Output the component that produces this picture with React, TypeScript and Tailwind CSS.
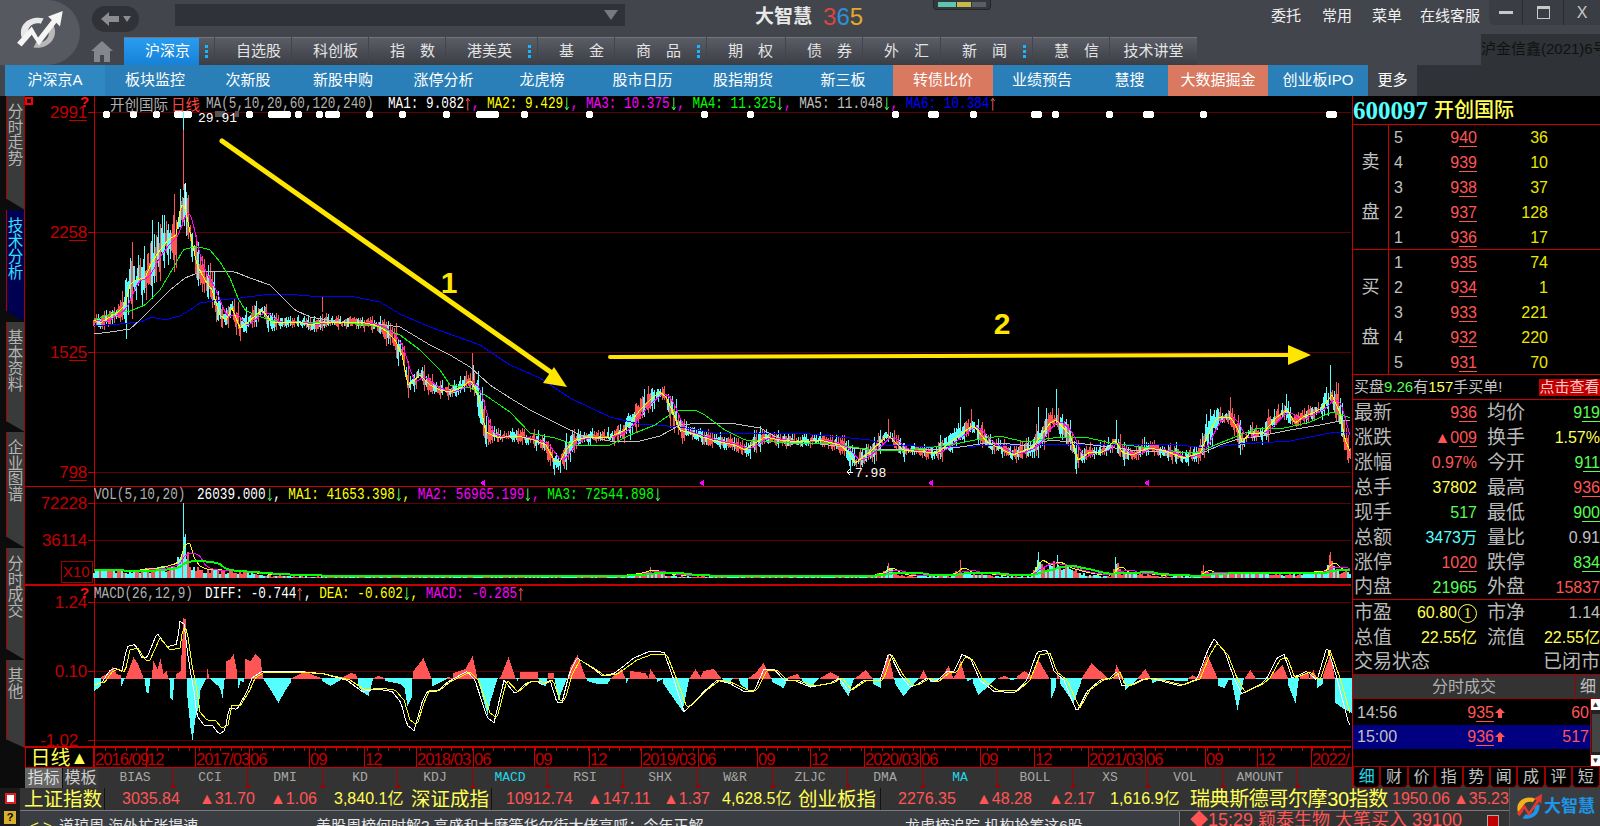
import type { ReactNode } from "react";

type Pt = [number, number];

const RED = "#ff5555";
const CYAN = "#55ffff";
const GRID = "#600000";
const AXIS = "#c00000";
const LINE = "#c80000";

const YELLOW: Pt[] = [[94,320],[100,323],[108,318],[118,312],[125,305],[130,285],[135,280],[145,278],[152,262],[160,250],[168,240],[176,235],[181,205],[185,207],[190,232],[197,265],[205,280],[212,290],[220,315],[226,320],[232,308],[240,328],[248,322],[256,315],[262,310],[272,322],[285,322],[300,322],[310,325],[325,322],[345,322],[360,322],[375,325],[385,330],[395,340],[402,355],[408,385],[412,382],[420,375],[430,385],[440,390],[450,392],[462,387],[471,380],[478,395],[486,432],[492,435],[500,438],[510,436],[522,437],[534,440],[546,445],[554,460],[560,462],[566,450],[575,440],[590,437],[610,437],[625,430],[640,410],[650,400],[660,392],[666,397],[672,410],[680,430],[690,433],[705,438],[720,442],[735,445],[745,450],[752,445],[765,437],[780,440],[800,442],[820,440],[840,445],[848,452],[855,463],[870,452],[888,435],[903,450],[937,453],[953,440],[973,425],[987,442],[1013,455],[1033,447],[1050,423],[1056,420],[1070,435],[1078,460],[1090,452],[1103,452],[1115,440],[1123,453],[1133,455],[1147,448],[1163,450],[1183,458],[1200,453],[1207,437],[1217,418],[1230,417],[1237,427],[1242,442],[1250,433],[1263,433],[1277,417],[1287,410],[1295,423],[1303,417],[1313,413],[1323,407],[1332,395],[1340,413],[1345,440],[1351,453]];
const GREEN: Pt[] = [[94,320],[120,311],[130,311],[145,305],[160,290],[175,265],[183,250],[190,248],[200,247],[210,250],[220,262],[230,278],[238,298],[245,310],[255,315],[270,320],[290,323],[320,322],[350,323],[380,327],[400,335],[420,350],[440,370],[450,385],[470,388],[485,395],[510,412],[530,433],[555,438],[575,445],[610,445],[630,435],[655,425],[675,411],[695,410],[705,415],[725,430],[745,440],[790,443],[830,443],[870,450],[910,450],[950,445],[975,440],[1000,436],[1025,442],[1060,437],[1085,437],[1110,443],[1150,448],[1180,452],[1200,452],[1215,445],[1235,437],[1258,428],[1285,428],[1310,422],[1332,412],[1351,418]];
const GRAY: Pt[] = [[94,334],[110,332],[130,329],[140,320],[155,305],[170,290],[185,278],[200,272],[215,271],[235,272],[250,278],[270,285],[285,300],[295,310],[310,317],[340,322],[370,323],[400,327],[430,345],[450,355],[470,367],[490,385],[510,398],[530,410],[560,425],[580,435],[610,441],[640,441],[660,436],[680,425],[700,423],[730,423],[760,428],[785,442],[820,444],[870,450],[940,449],[960,447],[980,444],[1000,443],[1030,446],[1050,440],[1070,442],[1100,446],[1130,450],[1180,453],[1205,452],[1220,445],[1235,440],[1260,436],[1290,430],[1320,425],[1345,420],[1351,421]];
const BLUE: Pt[] = [[94,326],[120,324],[140,322],[152,317],[165,320],[180,316],[190,310],[200,303],[220,300],[240,298],[270,294],[285,294],[310,296],[350,296],[380,302],[400,314],[430,327],[480,345],[510,365],[540,378],[570,398],[610,417],[640,424],[680,427],[720,434],[800,433],[870,440],[885,445],[950,447],[1000,445],[1035,445],[1060,444],[1100,444],[1180,445],[1205,448],[1240,444],[1290,441],[1330,433],[1351,432]];
const SPIKES: [number, number, number, string][] = [[183,112,130,CYAN],[183,130,190,RED],[322,297,312,RED],[472,353,385,RED],[473,365,380,CYAN],[662,387,400,RED],[888,419,440,RED],[960,407,440,CYAN],[971,409,430,RED],[1038,407,440,CYAN],[1056,389,425,CYAN],[1078,440,468,RED],[1116,420,445,CYAN],[1144,437,450,CYAN],[1230,397,425,RED],[1217,408,430,CYAN],[1286,394,420,CYAN],[1330,365,400,CYAN]];
const VOL_SPIKES: [number, number, string][] = [[183,503,CYAN],[185,534,CYAN],[182,552,RED],[650,567,RED],[888,563,RED],[960,560,RED],[1038,552,CYAN],[1057,555,CYAN],[1115,557,CYAN],[1203,565,RED],[1330,552,RED]];
const VOLUME: Pt[] = [[94,10],[130,8],[160,12],[175,18],[181,30],[183,75],[185,44],[188,30],[192,18],[200,10],[230,8],[260,4],[300,2],[400,2],[620,2],[640,5],[650,10],[660,5],[680,2],[870,2],[882,6],[888,14],[895,6],[905,2],[950,3],[957,8],[960,16],[965,6],[980,5],[1000,2],[1030,2],[1033,12],[1038,25],[1045,14],[1057,20],[1065,12],[1080,7],[1090,4],[1110,2],[1114,10],[1116,20],[1122,6],[1140,5],[1160,2],[1200,2],[1203,12],[1210,5],[1240,6],[1260,6],[1280,5],[1300,5],[1325,8],[1330,25],[1335,10],[1351,8]];
const HIST: Pt[] = [[94,-13],[100,-8],[101,2],[108,6],[112,12],[116,5],[120,4],[121,-8],[124,-1],[125,1],[128,8],[133,22],[138,14],[143,1],[144,-1],[146,-14],[148,-15],[150,-1],[151,1],[153,18],[157,10],[160,20],[163,5],[166,8],[168,1],[169,-2],[170,-20],[172,-22],[174,-1],[175,1],[176,5],[180,8],[182,40],[183,61],[185,60],[186,1],[187,-20],[190,-50],[192,-62],[195,-40],[198,-30],[200,-12],[205,-2],[206,1],[207,10],[209,1],[210,-1],[214,-5],[218,-8],[220,-12],[222,-20],[224,-2],[225,1],[226,18],[230,20],[233,25],[236,10],[237,1],[238,-10],[240,-3],[243,-4],[244,1],[245,20],[250,18],[255,25],[260,20],[262,5],[263,-1],[272,-15],[278,-25],[285,-12],[290,-5],[291,1],[300,5],[305,8],[310,5],[315,3],[321,1],[322,-3],[330,-8],[335,-5],[340,-2],[341,1],[350,6],[355,5],[357,1],[358,-8],[362,-14],[368,-18],[372,-3],[373,1],[378,3],[384,1],[385,-3],[400,-6],[404,-10],[407,-28],[411,-20],[412,1],[413,8],[423,21],[431,1],[432,-8],[446,-1],[447,2],[452,1],[453,6],[465,10],[472,23],[477,1],[478,-4],[487,-37],[490,-23],[497,-1],[500,2],[508,22],[515,1],[517,-3],[519,1],[520,7],[537,7],[538,-1],[540,-6],[545,-8],[547,1],[548,6],[553,6],[554,-1],[558,-22],[565,-4],[567,1],[570,12],[577,24],[585,2],[587,-3],[597,-6],[607,-6],[611,1],[621,10],[625,1],[626,-5],[629,1],[630,8],[645,6],[648,1],[650,10],[655,2],[657,-4],[662,-1],[663,-6],[682,-33],[688,-4],[689,1],[695,10],[700,2],[703,8],[713,10],[720,2],[722,-1],[728,-6],[732,-1],[733,1],[738,1],[740,-6],[747,-12],[748,1],[755,6],[763,16],[770,2],[772,-4],[783,-10],[787,-1],[788,2],[797,5],[800,1],[802,-3],[810,-10],[817,-2],[820,1],[830,7],[838,3],[840,-6],[848,-18],[853,-2],[855,1],[865,9],[872,1],[873,-6],[880,-10],[881,1],[888,25],[893,2],[895,-6],[903,-18],[917,-2],[919,1],[923,9],[927,1],[930,-4],[940,-1],[942,3],[948,13],[953,1],[957,8],[960,18],[965,1],[967,-3],[972,-1],[973,-6],[978,-17],[990,-6],[995,-1],[1000,2],[1005,3],[1008,1],[1010,-2],[1016,-1],[1017,3],[1024,8],[1030,4],[1032,5],[1038,19],[1048,2],[1050,-1],[1051,-20],[1055,-10],[1056,1],[1057,8],[1059,1],[1060,-6],[1073,-25],[1080,-6],[1082,2],[1091,16],[1107,1],[1109,-2],[1113,1],[1116,14],[1123,1],[1125,-12],[1137,-1],[1138,2],[1145,10],[1150,1],[1152,-5],[1160,-1],[1163,-2],[1187,-3],[1188,1],[1192,4],[1197,1],[1198,3],[1207,24],[1217,1],[1218,-8],[1224,-10],[1228,-2],[1231,-2],[1237,-32],[1243,-2],[1245,2],[1250,9],[1255,1],[1256,-1],[1269,-1],[1270,3],[1278,10],[1282,14],[1287,2],[1288,-8],[1295,-25],[1298,-3],[1300,4],[1308,5],[1309,-1],[1310,4],[1313,9],[1316,1],[1317,-10],[1322,-6],[1323,5],[1330,25],[1334,2],[1335,-25],[1342,-30],[1351,-35]];
const DEA: Pt[] = [[94,685],[105,682],[112,672],[118,669],[125,672],[130,650],[138,648],[145,660],[150,660],[160,638],[170,650],[180,648],[183,627],[187,630],[192,665],[197,690],[200,712],[207,720],[215,720],[222,728],[228,725],[232,705],[240,706],[250,690],[255,678],[265,672],[280,672],[300,672],[325,674],[350,680],[365,690],[380,688],[395,690],[404,700],[410,720],[417,725],[425,700],[430,690],[440,690],[450,682],[470,672],[478,680],[490,713],[497,718],[507,680],[518,692],[530,682],[540,681],[545,684],[553,680],[560,700],[565,700],[572,675],[580,660],[597,670],[605,676],[617,674],[623,670],[637,660],[653,654],[667,655],[677,680],[687,708],[697,700],[707,690],[720,680],[733,683],[747,690],[757,690],[767,670],[777,670],[787,680],[797,680],[813,686],[833,683],[842,678],[852,690],[867,680],[883,680],[892,655],[903,675],[913,686],[920,684],[930,678],[938,682],[950,672],[957,672],[965,657],[973,660],[983,680],[997,690],[1018,691],[1030,680],[1040,655],[1050,653],[1057,672],[1067,680],[1075,698],[1080,708],[1090,690],[1103,680],[1113,678],[1120,672],[1125,685],[1133,685],[1143,680],[1153,678],[1183,685],[1200,679],[1210,655],[1217,643],[1228,655],[1237,678],[1245,692],[1263,684],[1270,678],[1280,660],[1287,657],[1295,678],[1310,672],[1320,680],[1330,650],[1340,678],[1352,720]];

function at(points: Pt[], x: number) {
  if (x <= points[0][0]) return points[0][1];
  for (let i = 1; i < points.length; i++) {
    if (x <= points[i][0]) {
      const [x0, y0] = points[i - 1];
      const [x1, y1] = points[i];
      return y0 + ((y1 - y0) * (x - x0)) / (x1 - x0);
    }
  }
  return points[points.length - 1][1];
}

function trailing(points: Pt[], x: number, win: number) {
  let sum = 0;
  for (let i = 0; i < win; i += 2) sum += at(points, x - i);
  return sum / Math.ceil(win / 2);
}

function linePath(fn: (x: number) => number, from = 94, to = 1351) {
  let d = "";
  for (let x = from; x <= to; x += 2) d += `${d ? "L" : "M"}${x} ${fn(x).toFixed(1)}`;
  return d;
}

let seed = 7;
function rnd() {
  seed = (seed * 16807) % 2147483647;
  return seed / 2147483647;
}

function candles() {
  const out = { rw: "", rb: "", cw: "", cb: "" };
  for (let x = 94; x < 1351; x += 2) {
    const m = at(YELLOW, x);
    const slope = Math.abs(at(YELLOW, x + 5) - at(YELLOW, x - 5));
    let amp = Math.min(16, 5 + slope * 0.5);
    if (x > 125 && x < 190) amp += 10;
    const top = m - amp * rnd();
    const bot = m + amp * rnd();
    const wt = top - amp * rnd() * 0.9;
    const wb = bot + amp * rnd() * 0.7;
    if (rnd() > 0.5) {
      out.rw += `M${x} ${wt.toFixed(1)}V${wb.toFixed(1)}`;
      out.rb += `M${x} ${top.toFixed(1)}V${bot.toFixed(1)}`;
    } else {
      out.cw += `M${x} ${wt.toFixed(1)}V${wb.toFixed(1)}`;
      out.cb += `M${x} ${top.toFixed(1)}V${bot.toFixed(1)}`;
    }
  }
  return out;
}

function volumeBars() {
  const out = { r: "", c: "" };
  for (let x = 94; x < 1351; x += 2) {
    const h = at(VOLUME, x) * (0.45 + 0.55 * rnd());
    const d = `M${x} 578V${(578 - h).toFixed(1)}`;
    if (rnd() > 0.5) out.r += d;
    else out.c += d;
  }
  return out;
}

function histBars() {
  const out = { r: "", c: "" };
  for (let x = 94; x <= 1351; x++) {
    const v = at(HIST, x);
    if (v >= 0) out.r += `M${x} 679V${(679 - v).toFixed(1)}`;
    else out.c += `M${x} 678V${(678 - v).toFixed(1)}`;
  }
  return out;
}

const CANDLES = candles();
const VOLS = volumeBars();
const BARS = histBars();

const STARS = [106,133,156,177,181,185,188,249,271,275,279,283,287,298,319,328,332,336,369,402,446,479,483,487,491,495,524,589,704,750,895,931,935,973,1034,1038,1055,1109,1146,1150,1203,1329,1333];

function Grid({ ys, under }: { ys: [number, string, boolean?][]; under?: boolean }) {
  return (
    <>
      {ys.map(([y, label, noUnder]) => (
        <g key={y}>
          <path d={`M88 ${y}H94`} stroke={AXIS} />
          <path d={`M94 ${y}H1351`} stroke={GRID} />
          <text x={noUnder ? 78 : 87} y={y + 6} textAnchor="end" fill={AXIS} fontSize="17" fontFamily="Liberation Sans" letterSpacing="-0.2">
            {label}
          </text>
          {under && <path d={`M69 ${y + 8.5}H87`} stroke={AXIS} />}
        </g>
      ))}
    </>
  );
}

function Star({ x }: { x: number }) {
  return <path d={`M${x - 2} 111h5v1h1v5h-1v1h-5v-1h-1v-5h1z`} fill="#fff" />;
}

function MainChart() {
  return (
    <svg width="1327" height="391" viewBox="25 96 1327 391" className="block overflow-visible" shapeRendering="crispEdges">
      <Grid under ys={[[112, "2991"], [232, "2258"], [352, "1525"], [472, "798"]]} />
      <path d="M94 96V487" stroke={LINE} />
      <path d="M25 486.5H1351" stroke={LINE} />
      <rect x="26" y="98" width="6" height="6" fill="none" stroke="#ff0000" strokeWidth="2" />
      <text x="80" y="107" fill="#ff1010" fontSize="15" fontWeight="bold" fontFamily="Liberation Sans">?</text>
      {STARS.map((x) => <Star key={x} x={x} />)}
      <rect x="215" y="111" width="10" height="6" fill="#555" />
      <rect x="235" y="111" width="4" height="6" fill="#555" />
      <path d={CANDLES.rw} stroke={RED} />
      <path d={CANDLES.cw} stroke={CYAN} />
      <path d={CANDLES.rb} stroke={RED} strokeWidth="2" />
      <path d={CANDLES.cb} stroke={CYAN} strokeWidth="2" />
      {SPIKES.map(([x, a, b, c]) => <path key={`${x}-${a}`} d={`M${x} ${a}V${b}`} stroke={c} />)}
      <path d="M185 183V212" stroke="#fff" />
      <path d={linePath((x) => at(BLUE, x))} fill="none" stroke="#0000ff" />
      <path d={linePath((x) => at(GRAY, x))} fill="none" stroke="#c0c0c0" />
      <path d={linePath((x) => at(GREEN, x))} fill="none" stroke="#00ff00" />
      <path d={linePath((x) => trailing(YELLOW, x, 12))} fill="none" stroke="#ff00ff" />
      <path d={linePath((x) => at(YELLOW, x))} fill="none" stroke="#ffff00" />
      <text x="198" y="122" fill="#fff" fontSize="13" fontFamily="Liberation Mono">29.91</text>
      <path d="M847 472h6M847 472l3-3M847 472l3 3" stroke="#fff" fill="none" />
      <text x="855" y="477" fill="#fff" fontSize="13" fontFamily="Liberation Mono">7.98</text>
      {[485, 704, 933, 1149].map((x) => <path key={x} d={`M${x - 5} 483l5-3v6z`} fill="#ff00ff" />)}
      <g shapeRendering="auto">
        <path d="M222 141L552 373" stroke="#ffe600" strokeWidth="5" strokeLinecap="round" />
        <path d="M554 367L567 387L543 383Z" fill="#ffe600" />
        <path d="M610 357L1290 355" stroke="#ffe600" strokeWidth="4" strokeLinecap="round" />
        <path d="M1288 345L1311 355L1288 365Z" fill="#ffe600" />
        <text x="449" y="293" textAnchor="middle" fill="#ffe600" fontSize="30" fontWeight="bold" fontFamily="Liberation Sans">1</text>
        <text x="1002" y="334" textAnchor="middle" fill="#ffe600" fontSize="30" fontWeight="bold" fontFamily="Liberation Sans">2</text>
      </g>
    </svg>
  );
}

function VolChart() {
  return (
    <svg width="1327" height="99" viewBox="25 487 1327 99" className="block overflow-visible" shapeRendering="crispEdges">
      <Grid ys={[[503, "72228"], [540, "36114"]]} />
      <path d="M94 487V586" stroke={LINE} />
      <path d="M25 585H1351" stroke={LINE} strokeWidth="2" />
      <rect x="61.5" y="561.5" width="31" height="21" fill="none" stroke="#a00000" />
      <text x="63" y="577" fill={AXIS} fontSize="15" fontFamily="Liberation Sans">X10</text>
      <path d={VOLS.r} stroke={RED} strokeWidth="2" />
      <path d={VOLS.c} stroke={CYAN} strokeWidth="2" />
      {VOL_SPIKES.map(([x, y, c]) => <path key={x} d={`M${x} 578V${y}`} stroke={c} />)}
      <path d={linePath((x) => 577 - trailing(VOLUME, x, 10) * 0.8)} fill="none" stroke="#ffff00" />
      <path d={linePath((x) => 577 - trailing(VOLUME, x, 20) * 0.75)} fill="none" stroke="#ff00ff" />
      <path d={linePath((x) => 577 - trailing(VOLUME, x, 40) * 0.7)} fill="none" stroke="#00ff00" strokeWidth="2" />
    </svg>
  );
}

function MacdChart() {
  return (
    <svg width="1327" height="162" viewBox="25 586 1327 162" className="block overflow-visible" shapeRendering="crispEdges">
      <Grid ys={[[602, "1.24"], [671, "0.10"]]} />
      <Grid ys={[[740, "-1.02", true]]} />
      <path d="M94 586V748" stroke={LINE} />
      <path d="M25 747H1351" stroke={LINE} strokeWidth="2" />
      <text x="80" y="598" fill="#ff1010" fontSize="15" fontWeight="bold" fontFamily="Liberation Sans">?</text>
      <path d={BARS.r} stroke={RED} />
      <path d={BARS.c} stroke={CYAN} />
      <path d={linePath((x) => { const v = at(DEA, x + 3); return v + (v - 678) * 0.12; })} fill="none" stroke="#ffffff" />
      <path d={linePath((x) => at(DEA, x))} fill="none" stroke="#ffff00" />
    </svg>
  );
}

const DATES: [number, string][] = [[95,"2016/09"],[147,"12"],[196,"2017/03"],[250,"06"],[310,"09"],[365,"12"],[417,"2018/03"],[474,"06"],[535,"09"],[590,"12"],[642,"2019/03"],[699,"06"],[758,"09"],[811,"12"],[865,"2020/03"],[921,"06"],[981,"09"],[1035,"12"],[1089,"2021/03"],[1146,"06"],[1206,"09"],[1258,"12"],[1312,"2022/"]];

function TimeAxis() {
  let ticks = "";
  for (let x = 94; x < 1351; x += 10.5) ticks += `M${Math.round(x)} 748v3`;
  return (
    <svg width="1258" height="20" viewBox="94 748 1258 20" className="block" shapeRendering="crispEdges">
      <path d={ticks} stroke={LINE} />
      <path d="M94 767H1352" stroke={LINE} />
      {DATES.map(([x, label]) => (
        <g key={x}>
          <path d={`M${x - 1} 748V768`} stroke={LINE} />
          <text x={x} y="765" fill={AXIS} fontSize="16.5" letterSpacing="-0.9" fontFamily="Liberation Sans">{label}</text>
        </g>
      ))}
    </svg>
  );
}

function Mono({ c, children }: { c: string; children: ReactNode }) {
  return <span className={`scale-y-125 ${c}`}>{children}</span>;
}

function Arrow({ up }: { up?: boolean }) {
  return (
    <svg viewBox="0 0 8 14" className="h-[14px] w-[7.6px]" aria-hidden="true">
      {up ? (
        <path d="M4 1V14M2 4L4 1L6 4" fill="none" stroke="#ff5555" />
      ) : (
        <path d="M4 0V13M2 10L4 13L6 10" fill="none" stroke="#55ff55" />
      )}
    </svg>
  );
}

const NAV = [
  { t: "沪深京", w: "w-[90px]", dots: true, on: true },
  { t: "自选股", w: "w-[76px]" },
  { t: "科创板", w: "w-[76px]" },
  { t: "指　数", w: "w-[76px]" },
  { t: "港美英", w: "w-[91px]", dots: true },
  { t: "基　金", w: "w-[76px]" },
  { t: "商　品", w: "w-[91px]", dots: true },
  { t: "期　权", w: "w-[78px]" },
  { t: "债　券", w: "w-[76px]" },
  { t: "外　汇", w: "w-[77px]" },
  { t: "新　闻", w: "w-[91px]", dots: true },
  { t: "慧　信", w: "w-[76px]" },
  { t: "技术讲堂", w: "w-[87px]" },
];

const SUB = [
  { t: "沪深京A", c: "w-[100px] bg-[#3088c2]" },
  { t: "板块监控", c: "w-[100px]" },
  { t: "次新股", c: "w-[86px]" },
  { t: "新股申购", c: "w-[104px]" },
  { t: "涨停分析", c: "w-[97px]" },
  { t: "龙虎榜", c: "w-[100px]" },
  { t: "股市日历", c: "w-[101px]" },
  { t: "股指期货", c: "w-[100px]" },
  { t: "新三板", c: "w-[100px]" },
  { t: "转债比价", c: "w-[100px] bg-[#d9795f]" },
  { t: "业绩预告", c: "w-[98px]" },
  { t: "慧搜", c: "w-[77px]" },
  { t: "大数据掘金", c: "w-[100px] bg-[#d9795f]" },
  { t: "创业板IPO", c: "w-[100px]" },
];

function Dots() {
  return (
    <span className="ml-auto mr-[6px] flex flex-col gap-[2px]">
      <span className="size-[3px] bg-[#19b5ff]" />
      <span className="size-[3px] bg-[#19b5ff]" />
      <span className="size-[3px] bg-[#19b5ff]" />
    </span>
  );
}

function Header() {
  return (
    <div className="flex h-[65px] bg-[#42454c]">
      <div className="flex h-full w-[80px] items-center justify-center rounded-r-[36px] bg-[#565960]">
        <svg viewBox="0 0 56 46" className="ml-[-2px] mt-[-4px] h-[42px] w-[52px]" aria-hidden="true">
          <path d="M9 30C5 15 18 6 33 9L30 15C21 13 14 19 16 29Z" fill="#e8e8e8" />
          <path d="M44 17C50 30 38 44 22 41L25 35C35 37 41 29 38 21Z" fill="#b8b8b8" />
          <path d="M4 36L20 18L27 30L42 11L38 7L54 1L51 18L47 14L28 39L20 27L9 40Z" fill="#f5f5f5" />
        </svg>
      </div>
      <div className="flex flex-1 flex-col">
        <div className="flex h-[36px] items-start">
          <div className="ml-[12px] mt-[6px] flex h-[26px] w-[47px] items-center justify-center gap-[3px] rounded-full bg-[#303237]">
            <svg viewBox="0 0 20 16" className="h-[16px] w-[20px]" aria-hidden="true">
              <path d="M9 1L1 8L9 15V11H19V5H9Z" fill="#8a8c90" />
            </svg>
            <svg viewBox="0 0 8 6" className="h-[6px] w-[8px]" aria-hidden="true">
              <path d="M0 0H8L4 6Z" fill="#8a8c90" />
            </svg>
          </div>
          <div className="ml-[36px] mt-[4px] flex h-[22px] w-[450px] items-center justify-end bg-[#2f3237] pr-[7px]">
            <svg viewBox="0 0 14 10" className="h-[10px] w-[14px]" aria-hidden="true">
              <path d="M0 0H14L7 10Z" fill="#777a80" />
            </svg>
          </div>
          <div className="ml-[130px] mt-[6px] flex items-center">
            <span className="text-[19px] font-bold leading-[22px] text-[#e8e8e8]">大智慧</span>
            <span className="ml-[11px] text-[24px] leading-[22px] font-['Liberation_Sans',sans-serif]">
              <span className="text-[#d9473e]">3</span>
              <span className="text-[#2f8fd8]">6</span>
              <span className="text-[#e2a92c]">5</span>
            </span>
          </div>
          <div className="ml-[70px] flex h-[10px] w-[58px] items-center justify-center gap-[1px] rounded-b-[4px] border border-t-0 border-[#23252a] bg-[#34373d]">
            <span className="h-[5px] w-[18px] bg-[#5ec6b0]" />
            <span className="h-[5px] w-[14px] bg-[#c8b84a]" />
            <span className="h-[5px] w-[14px] bg-[#5a5d63]" />
          </div>
          <div className="ml-[280px] mt-[7px] flex gap-[21px] text-[15px] leading-[17px] text-[#f0f0f0]">
            <span className="w-[30px] whitespace-nowrap">委托</span>
            <span className="w-[29px] whitespace-nowrap">常用</span>
            <span className="w-[27px] whitespace-nowrap">菜单</span>
            <span className="w-[60px] whitespace-nowrap">在线客服</span>
          </div>
          <div className="ml-auto flex h-[25px] w-[111px] rounded-bl-[6px] bg-[#3a3d43] text-[#c8c8c8]">
            <div className="flex w-[34px] items-center justify-center border-r border-[#2a2c31]">
              <span className="h-[3px] w-[14px] bg-[#c8c8c8]" />
            </div>
            <div className="flex w-[41px] items-center justify-center border-r border-[#2a2c31]">
              <span className="h-[13px] w-[13px] border border-t-[3px] border-[#c8c8c8]" />
            </div>
            <div className="flex flex-1 items-center justify-center text-[16px] font-['Liberation_Sans',sans-serif]">X</div>
          </div>
        </div>
        <div className="flex h-[29px] items-end">
          <div className="flex h-full w-[44px] items-center justify-center">
            <svg viewBox="0 0 24 24" className="size-[24px]" aria-hidden="true">
              <path d="M12 2L1 12H4V23H10V16H14V23H20V12H23Z" fill="#85878c" />
            </svg>
          </div>
          <div className="flex h-[28px] gap-[1px]">
            {NAV.map((n) => (
              <div
                key={n.t}
                className={`flex h-full items-center border-t border-[#72757c] bg-gradient-to-b from-[#5a5d65] to-[#3b3e45] text-[15px] text-[#e4e4e4] ${n.w}`}
              >
                {n.on ? (
                  <span className="flex h-full w-[75px] items-center justify-center bg-gradient-to-b from-[#2a9df0] to-[#1581d8] pl-[12px] text-white">
                    {n.t}
                  </span>
                ) : (
                  <span className="w-[75px] whitespace-nowrap pl-[12px] text-center">{n.t}</span>
                )}
                {n.dots && <Dots />}
              </div>
            ))}
          </div>
          <div className="ml-auto flex h-[31px] w-[119px] items-center overflow-hidden whitespace-nowrap bg-[#2f3237] text-[15px] text-[#111]">
            泸金信鑫(2021)6号
          </div>
        </div>
      </div>
    </div>
  );
}

function SubNav() {
  return (
    <div className="flex h-[31px] bg-[#2f3237]">
      <div className="w-[5px] bg-[#42454c]" />
      <div className="flex bg-[#2b7fb8] text-[15px] text-white">
        {SUB.map((s) => (
          <div key={s.t} className={`flex items-center justify-center whitespace-nowrap ${s.c}`}>
            {s.t}
          </div>
        ))}
      </div>
      <div className="flex w-[49px] items-center justify-center bg-[#42454c] text-[15px] text-white">更多</div>
    </div>
  );
}

const SIDE = [
  { t: "分时走势", h: "h-[114px]" },
  { t: "技术分析", h: "h-[112px]", on: true },
  { t: "基本资料", h: "h-[110px]" },
  { t: "企业图谱", h: "h-[116px]" },
  { t: "分时成交", h: "h-[112px]" },
  { t: "其他", h: "h-[88px]" },
];

function SideBar() {
  return (
    <div className="flex w-[25px] flex-col bg-[#0c0c0c]">
      {SIDE.map((s) => (
        <div
          key={s.t}
          className={`ml-[6px] flex flex-col items-center border-x border-[#b00000] pt-[8px] text-[15.5px] leading-[15.5px] [clip-path:polygon(0_0,100%_0,100%_100%,100%_100%,0_90%)] ${s.h} ${s.on ? "bg-[#000050] text-[#33e0ff]" : "bg-[#3a3a3a] text-[#b4b4b4]"}`}
        >
          {s.t.split("").map((ch, i) => <span key={i}>{ch}</span>)}
        </div>
      ))}
      <div className="flex-1" />
    </div>
  );
}

const IND = ["BIAS","CCI","DMI","KD","KDJ","MACD","RSI","SHX","W&R","ZLJC","DMA","MA","BOLL","XS","VOL","AMOUNT"];

function IndicatorTabs() {
  return (
    <div className="flex h-[20px] items-stretch bg-[#0c0c0c] pl-[25px]">
      <div className="flex w-[37px] items-center justify-center bg-[#666] text-[16px] text-[#ddd]">指标</div>
      <div className="ml-[1px] flex w-[35px] items-center justify-center bg-[#3a3a3a] text-[16px] text-[#ccc]">模板</div>
      <div className="flex flex-1 bg-[#333]">
        {IND.map((n) => (
          <div
            key={n}
            className={`relative flex w-[75px] items-center justify-center border-r border-[#a00000] text-[13px] font-['Liberation_Mono',monospace] ${n === "MACD" || n === "MA" ? "text-[#22d8e8]" : "text-[#a8a8a8]"}`}
          >
            {n}
            <span className="absolute bottom-0 right-[-4px] h-0 w-0 border-x-[3px] border-b-[4px] border-x-transparent border-b-[#a00000] bg-transparent" />
          </div>
        ))}
      </div>
    </div>
  );
}

function Under({ v, color }: { v: string; color: string }) {
  return (
    <>
      {v.slice(0, -2)}
      <span className={`border-b ${color}`}>{v.slice(-2)}</span>
    </>
  );
}

const SELL: [string, string, string][] = [["5","940","36"],["4","939","10"],["3","938","37"],["2","937","128"],["1","936","17"]];
const BUY: [string, string, string][] = [["1","935","74"],["2","934","1"],["3","933","221"],["4","932","220"],["5","931","70"]];

function BookSide({ rows, name }: { rows: [string, string, string][]; name: string }) {
  return (
    <div className="flex h-[125px] border-b border-[#c80000]">
      <div className="flex w-[36px] flex-col items-center justify-center gap-[32px] border-r border-[#c80000] text-[18px] leading-[18px] text-[#c0c0c0]">
        <span>{name}</span>
        <span>盘</span>
      </div>
      <div className="flex-1 pt-[1px]">
        {rows.map(([n, p, q]) => (
          <div key={p} className="flex h-[24.8px] items-center text-[16px]">
            <span className="ml-[5px] w-[10px] text-[#c0c0c0]">{n}</span>
            <span className="w-[73px] text-right text-[#ff5555]"><Under v={p} color="border-[#ff5555]" /></span>
            <span className="w-[71px] text-right text-[#e8e800]">{q}</span>
          </div>
        ))}
      </div>
    </div>
  );
}

type Stat = { l: string; v: ReactNode; c: string };
const R = "text-[#ff5555]";
const G = "text-[#55ff55]";
const Y = "text-[#ffff55]";
const W = "text-[#c0c0c0]";
const uR = "border-[#ff5555]";
const uG = "border-[#55ff55]";

const STATS: [Stat, Stat][] = [
  [{ l: "最新", v: <Under v="936" color={uR} />, c: R }, { l: "均价", v: <Under v="919" color={uG} />, c: G }],
  [{ l: "涨跌", v: <>▲<Under v="009" color={uR} /></>, c: R }, { l: "换手", v: "1.57%", c: Y }],
  [{ l: "涨幅", v: "0.97%", c: R }, { l: "今开", v: <Under v="911" color={uG} />, c: G }],
  [{ l: "总手", v: "37802", c: Y }, { l: "最高", v: <Under v="936" color={uR} />, c: R }],
  [{ l: "现手", v: "517", c: G }, { l: "最低", v: <Under v="900" color={uG} />, c: G }],
  [{ l: "总额", v: "3473万", c: "text-[#55ffff]" }, { l: "量比", v: "0.91", c: W }],
  [{ l: "涨停", v: <Under v="1020" color={uR} />, c: R }, { l: "跌停", v: <Under v="834" color={uG} />, c: G }],
  [{ l: "内盘", v: "21965", c: G }, { l: "外盘", v: "15837", c: R }],
];

const STATS2: [Stat, Stat][] = [
  [{ l: "市盈", v: <>60.80<span className="ml-[1px] inline-flex size-[19px] items-center justify-center rounded-full border border-[#ffff55] text-[15px] font-['Liberation_Serif',serif]">1</span></>, c: Y }, { l: "市净", v: "1.14", c: W }],
  [{ l: "总值", v: "22.55亿", c: Y }, { l: "流值", v: "22.55亿", c: Y }],
];

function StatRow({ row }: { row: [Stat, Stat] }) {
  const [a, b] = row;
  return (
    <div className="flex h-[24.9px] items-center whitespace-nowrap">
      <span className="ml-[1px] w-[40px] text-[19px] text-[#b8b8b8]">{a.l}</span>
      <span className={`w-[83px] text-right text-[16px] ${a.c}`}>{a.v}</span>
      <span className="ml-[10px] w-[40px] text-[19px] text-[#b8b8b8]">{b.l}</span>
      <span className={`w-[73px] overflow-hidden text-right text-[16px] ${b.c}`}>{b.v}</span>
    </div>
  );
}

function Trade({ t, p, q, on }: { t: string; p: string; q: string; on?: boolean }) {
  return (
    <div className={`flex h-[24px] items-center text-[16px] ${on ? "bg-[#000080]" : ""}`}>
      <span className="ml-[4px] w-[60px] text-[#c0c0c0]">{t}</span>
      <span className="w-[77px] text-right text-[#ff5555]"><Under v={p} color="border-[#ff5555]" /></span>
      <svg viewBox="0 0 10 10" className="ml-[1px] size-[10px]" aria-hidden="true">
        <path d="M5 0L10 5H7V10H3V5H0Z" fill="#ff5555" />
      </svg>
      <span className="w-[84px] text-right text-[#ff5555]">{q}</span>
    </div>
  );
}

function RightPanel() {
  return (
    <div className="flex w-[248px] flex-col border-l border-[#c80000]">
      <div className="flex h-[29px] items-center border-b border-[#c80000]">
        <span className="text-[25px] font-bold leading-none text-[#55ffff] font-['Liberation_Serif',serif]">600097</span>
        <span className="ml-[6px] text-[20px] font-medium leading-none text-[#ffff55]">开创国际</span>
      </div>
      <BookSide rows={SELL} name="卖" />
      <BookSide rows={BUY} name="买" />
      <div className="flex h-[25px] items-center justify-between border-b border-[#c80000] text-[15px] text-[#c0c0c0]">
        <span className="ml-[1px] whitespace-nowrap">
          买盘<span className="text-[#55ff55]">9.26</span>有<span className="text-[#ffff55]">157</span>手买单!
        </span>
        <span className="flex h-[17px] w-[61px] items-center justify-center whitespace-nowrap bg-[#c00000] text-[#ffc8c8]">点击查看</span>
      </div>
      <div className="h-[200px] border-b border-[#c80000] pt-[1px]">
        {STATS.map((row) => <StatRow key={row[0].l} row={row} />)}
      </div>
      <div className="h-[74px] pt-[1px]">
        {STATS2.map((row) => <StatRow key={row[0].l} row={row} />)}
        <div className="flex h-[23px] items-center justify-between text-[19px] text-[#b8b8b8]">
          <span className="ml-[1px]">交易状态</span>
          <span>已闭市</span>
        </div>
      </div>
      <div className="flex h-[25px] border-y border-[#a00000] bg-[#333]">
        <span className="flex flex-1 items-center justify-center text-[16px] text-[#b0b0b0]">分时成交</span>
        <span className="flex w-[25px] items-center justify-center border-l border-[#a00000] text-[16px] text-[#c0c0c0]">细</span>
      </div>
      <div className="flex h-[67px]">
        <div className="flex-1 pt-[2px]">
          <Trade t="14:56" p="935" q="60" />
          <Trade t="15:00" p="936" q="517" on />
        </div>
        <div className="flex w-[10px] flex-col items-center justify-between border-l border-[#a00000] bg-[#222]">
          <span className="flex h-[11px] w-full items-center justify-center bg-white text-[8px] leading-none text-[#333]">▲</span>
          <span className="h-[38px] w-[8px] bg-[#444]" />
          <span className="flex h-[11px] w-full items-center justify-center bg-white text-[8px] leading-none text-[#333]">▼</span>
        </div>
      </div>
      <div className="flex h-[22px] border-t border-[#a00000] bg-[#3a3a3a]">
        {"细财价指势闻成评短".split("").map((ch, i) => (
          <span
            key={ch}
            className={`flex w-[27.4px] items-center justify-center rounded-b-[5px] border-x border-b border-[#a00000] bg-black text-[16px] leading-none ${i === 0 ? "text-[#22d8e8]" : "text-[#c0c0c0]"}`}
          >
            {ch}
          </span>
        ))}
      </div>
    </div>
  );
}

const QUOTES = [
  { t: "上证指数", c: "w-[85px] pl-[4px] border-r border-[#111] text-[19.5px] text-[#ffff55]" },
  { t: "3035.84", c: "w-[94px] pl-[17px] text-[#ff5555]" },
  { t: "▲31.70", c: "w-[71px] text-[#ff5555]" },
  { t: "▲1.06", c: "w-[64px] text-[#ff5555]" },
  { t: "3,840.1亿", c: "w-[77px] text-[#ffff55]" },
  { t: "深证成指", c: "w-[81px] border-r border-[#111] text-[19.5px] text-[#ffff55]" },
  { t: "10912.74", c: "w-[95px] pl-[14px] text-[#ff5555]" },
  { t: "▲147.11", c: "w-[76px] text-[#ff5555]" },
  { t: "▲1.37", c: "w-[59px] text-[#ff5555]" },
  { t: "4,628.5亿", c: "w-[76px] text-[#ffff55]" },
  { t: "创业板指", c: "w-[83px] border-r border-[#111] text-[19.5px] text-[#ffff55]" },
  { t: "2276.35", c: "w-[95px] pl-[17px] text-[#ff5555]" },
  { t: "▲48.28", c: "w-[72px] text-[#ff5555]" },
  { t: "▲2.17", c: "w-[62px] text-[#ff5555]" },
  { t: "1,616.9亿", c: "w-[80px] text-[#ffff55]" },
  { t: "瑞典斯德哥尔摩30指数", c: "w-[202px] text-[20px] tracking-[-0.4px] text-[#ffff55]" },
  { t: "1950.06", c: "w-[61px] text-[#ff5555]" },
  { t: "▲35.23", c: "w-[55px] text-[#ff5555]" },
];

function BottomBar() {
  return (
    <div className="flex h-[38px] bg-[#333]">
      <div className="flex w-[20px] flex-col items-center bg-[#1a1a1a] pt-[5px]">
        <span className="size-[11px] border-2 border-[#e02020] bg-white" />
        <span className="mt-[7px] flex h-[13px] w-[12px] items-center justify-center bg-[#d8b030] text-[11px] font-bold leading-none text-black">?</span>
      </div>
      <div className="flex w-[1489px] flex-col">
        <div className="flex h-[22px] items-center whitespace-nowrap text-[16px] leading-[22px]">
          {QUOTES.map((q) => <span key={q.t} className={`h-full ${q.c}`}>{q.t}</span>)}
        </div>
        <div className="flex h-[16px] overflow-hidden">
          <div className="flex w-[1160px] whitespace-nowrap rounded-tr-[2px] border-t border-r border-[#7a7a7a] bg-[#3a3d42] pl-[10px] pt-[6px] text-[15px] leading-[18px] text-[#e8e8e8]">
            <span className="w-[29px] text-[#ffff55]">&lt; &gt;</span>
            <span className="w-[257px]">道琼周 海外扩张提速</span>
            <span className="w-[589px]">美股周榜何时解? 高盛和大摩等华尔街大佬高呼：今年正解</span>
            <span>龙虎榜追踪 机构抢筹这6股</span>
          </div>
          <div className="flex flex-1 border-t border-[#777] pl-[10px] text-[18px] leading-[18px] text-[#ff5555]">
            <span className="whitespace-nowrap">◆15:29 颖泰生物 大笔买入 39100</span>
            <span className="ml-auto mr-[10px] mt-[4px] h-[12px] w-[12px] border border-[#aaa] bg-[#c00000]" />
          </div>
        </div>
      </div>
      <div className="flex w-[91px] items-center justify-center gap-[1px] border-l border-[#555] bg-[#3a3d42]">
        <svg viewBox="0 0 30 30" className="size-[28px]" aria-hidden="true">
          <path d="M3 20C0 8 12 2 22 6L19 10C12 8 7 12 8 20Z" fill="#f2b21b" />
          <path d="M26 12C28 22 18 30 8 27L11 23C18 24 22 20 21 14Z" fill="#1e96e8" />
          <path d="M2 22L10 12L15 20L23 8L20 6L29 1L28 12L26 9L15 25L10 17L5 25Z" fill="#e23b2e" />
        </svg>
        <span className="whitespace-nowrap text-[17px] font-bold text-[#1e96e8]">大智慧</span>
      </div>
    </div>
  );
}

export default function App() {
  return (
    <div className="flex h-[826px] w-[1600px] flex-col overflow-hidden bg-black font-['Liberation_Sans','Noto_Sans_CJK_SC',sans-serif]">
      <Header />
      <SubNav />
      <div className="flex h-[692px]">
        <div className="flex w-[1352px] flex-col">
          <div className="flex h-[672px]">
            <SideBar />
            <div className="flex flex-1 flex-col">
              <div className="relative h-[391px]">
                <MainChart />
                <div className="absolute left-[85px] top-0 flex h-[16px] items-center whitespace-pre text-[12.7px] font-['Liberation_Mono','Noto_Sans_CJK_SC',monospace]">
                  <span className="font-['Noto_Sans_CJK_SC',sans-serif] text-[14.5px] text-[#b0b0b0]">开创国际</span>
                  <span className="ml-[3px] font-['Noto_Sans_CJK_SC',sans-serif] text-[14.5px] text-[#ff4444]">日线</span>
                  <Mono c="ml-[6px] w-[182px] text-[#b0b0b0]">MA(5,10,20,60,120,240)</Mono>
                  <Mono c="text-white">MA1: 9.082</Mono><Arrow up /><Mono c="text-[#ff00ff]">, </Mono>
                  <Mono c="text-[#ffff00]">MA2: 9.429</Mono><Arrow /><Mono c="text-[#ff00ff]">, </Mono>
                  <Mono c="text-[#ff00ff]">MA3: 10.375</Mono><Arrow /><Mono c="text-[#ff00ff]">, </Mono>
                  <Mono c="text-[#00ff00]">MA4: 11.325</Mono><Arrow /><Mono c="text-[#ff00ff]">, </Mono>
                  <Mono c="text-[#c0c0c0]">MA5: 11.048</Mono><Arrow /><Mono c="text-[#ff00ff]">, </Mono>
                  <Mono c="text-[#0000ff]">MA6: 10.384</Mono><Arrow up />
                </div>
              </div>
              <div className="relative h-[99px]">
                <VolChart />
                <div className="absolute left-[69px] top-0 flex h-[16px] items-center whitespace-pre text-[12.7px] font-['Liberation_Mono',monospace]">
                  <Mono c="w-[103px] text-[#b0b0b0]">VOL(5,10,20)</Mono>
                  <Mono c="text-white">26039.000</Mono><Arrow /><Mono c="text-white">, </Mono>
                  <Mono c="text-[#ffff00]">MA1: 41653.398</Mono><Arrow /><Mono c="text-[#ffff00]">, </Mono>
                  <Mono c="text-[#ff00ff]">MA2: 56965.199</Mono><Arrow /><Mono c="text-[#ff00ff]">, </Mono>
                  <Mono c="text-[#00ff00]">MA3: 72544.898</Mono><Arrow />
                </div>
              </div>
              <div className="relative h-[162px]">
                <MacdChart />
                <div className="absolute left-[69px] top-0 flex h-[16px] items-center whitespace-pre text-[12.7px] font-['Liberation_Mono',monospace]">
                  <Mono c="w-[111px] text-[#b0b0b0]">MACD(26,12,9)</Mono>
                  <Mono c="text-white">DIFF: -0.744</Mono><Arrow up /><Mono c="text-white">, </Mono>
                  <Mono c="text-[#ffff00]">DEA: -0.602</Mono><Arrow /><Mono c="text-[#ffff00]">, </Mono>
                  <Mono c="text-[#ff00ff]">MACD: -0.285</Mono><Arrow up />
                </div>
              </div>
              <div className="flex h-[20px]">
                <div className="flex w-[69px] items-center justify-center border-x border-b border-[#c80000] text-[20px] leading-none text-[#ffff55]">
                  日线<span className="text-[18px]">▲</span>
                </div>
                <TimeAxis />
              </div>
            </div>
          </div>
          <IndicatorTabs />
        </div>
        <RightPanel />
      </div>
      <BottomBar />
    </div>
  );
}
